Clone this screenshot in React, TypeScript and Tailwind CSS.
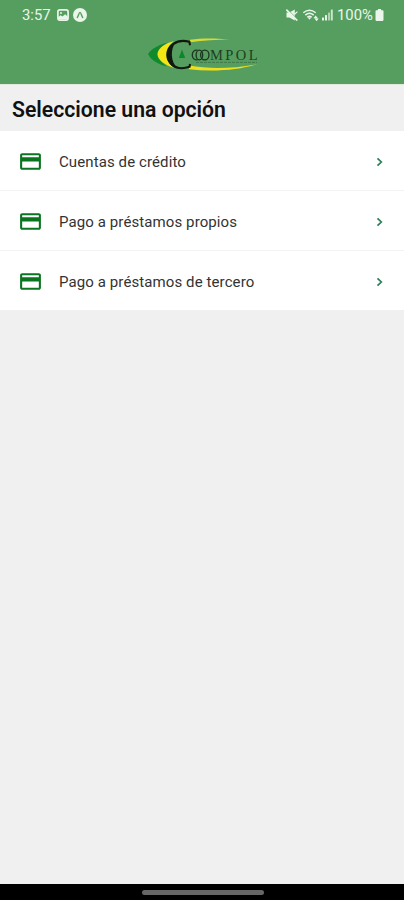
import React from 'react';
import { MdCreditCard } from 'react-icons/md';

const options = [
    'Cuentas de crédito',
    'Pago a préstamos propios',
    'Pago a préstamos de tercero',
];

function StatusBar() {
    return (
        <div className="flex justify-between items-center h-[31px] pl-[22px] pr-[20px] text-[#e9f6e9]">
            <div className="flex items-center">
                <span className="w-[35px] text-[14.8px] leading-none">3:57</span>
                {/* Gallery notification */}
                <svg width="12" height="12" viewBox="0 0 12 12">
                    <rect x="0.9" y="0.9" width="10.2" height="10.2" rx="2" fill="none" stroke="currentColor" strokeWidth="1.7" />
                    <path d="M1 10.5V8.2l2.6-2 1.9 1.3 2.6-2.3L11 7.8v2.7z" fill="currentColor" />
                    <circle cx="4" cy="4" r="1" fill="currentColor" />
                </svg>
                <svg width="14" height="14" viewBox="0 0 14 14" className="ml-[4px]">
                    <circle cx="7" cy="7" r="7" fill="currentColor" />
                    <path d="M4.3 9.4C5.6 8 5.8 4.4 7 4.4S8.4 8 9.7 9.4" fill="none" stroke="#569e60" strokeWidth="1.4" strokeLinecap="round" />
                </svg>
            </div>
            <div className="flex items-center">
                {/* Muted speaker */}
                <svg width="12" height="12" viewBox="0 0 12 12" className="mr-[4px]">
                    <path d="M0.5 3.4h2.8L8.8 0.4v11.2L3.3 8.4H0.5z" fill="currentColor" />
                    <path d="M1.4 0.2l10.4 10.4" stroke="#569e60" strokeWidth="0.8" />
                    <path d="M0.3 0.6l11 11" stroke="currentColor" strokeWidth="1.6" />
                    <path d="M8.6 5.2l2.8-2.6" stroke="currentColor" strokeWidth="1.2" />
                </svg>
                {/* Wifi */}
                <svg width="18" height="14" viewBox="0 0 17 14">
                    <g fill="none" stroke="currentColor" strokeWidth="1.5">
                        <path d="M0.8 4.8Q7 -0.4 13.2 4.8" />
                        <path d="M2.8 7.1Q7 3.5 11.2 7.1" />
                        <path d="M4.8 9.3Q7 7.4 9.2 9.3" />
                    </g>
                    <path d="M5.2 9.5h3.6L7 11.8z" fill="currentColor" />
                    <path d="M11 10.2l2.2-2.6 2.2 2.6zM12 10.6h4.2l-2.1 2.6z" fill="currentColor" />
                </svg>
                {/* Signal */}
                <svg width="13" height="12" viewBox="0 0 13 12" className="ml-[1px]">
                    <g fill="currentColor">
                        <rect x="1" y="8.4" width="2" height="3" rx="0.5" />
                        <rect x="4" y="6" width="2" height="5.4" rx="0.5" />
                        <rect x="7" y="3.4" width="2" height="8" rx="0.5" opacity="0.6" />
                        <rect x="9.8" y="0.6" width="2" height="10.8" rx="0.5" opacity="0.8" />
                    </g>
                </svg>
                <span className="w-[38px] ml-[3px] text-[14.8px] leading-none">100%</span>
                <svg width="9" height="12" viewBox="0 0 8 12">
                    <path d="M2.4 0h3.2v1.3H7q1 0 1 1v8.5q0 1.2-1.2 1.2H1.2Q0 12 0 10.8V2.3q0-1 1-1h1.4z" fill="currentColor" />
                </svg>
            </div>
        </div>
    );
}

function Logo() {
    return (
        <svg width="130" height="46" viewBox="0 0 130 46">
            {/* Swooshes */}
            <path d="M28 10.5C20 12 11 17 8 22C10 27 17 32 27 34.5C20 29 17.5 25.5 17.5 22C17.5 18.5 21 14 28 10.5z" fill="#108b2c" />
            <path d="M34 9C26 11 18 16 17.5 22C17.5 28 25 33 34 36C29 31 26.5 27 26.5 22C26.5 17 29 13 34 9z" fill="#f5e514" />
            <path d="M50 7.8C62 6 74 6 90 7.6C76 8 64 8.6 50 10.2z" fill="#d9db32" />
            <path d="M49 33.6C70 37.2 93 36.5 117 32.2C98 38.2 73 40 49 37.2z" fill="#f0e01c" />
            {/* Large C */}
            <path d="M50 13.2L49.4 9.8C44 8.4 38 8.6 33.6 11.8C26.6 17 26.4 27.5 32.2 32.8C37 36.9 43.5 36.8 49.6 34.8L50 32" fill="none" stroke="#10180f" strokeWidth="2.1" />
            <path d="M36 9.8C26 13 23.6 24.5 29.5 31.8C32 35 35 36.5 38 36.6C30.6 31 29.8 17 36 9.8z" fill="#10180f" />
            <path d="M42 17.5l3.2 8.5h-6.4z" fill="#08892a" />
            {/* Interlocked letters */}
            <g fill="none" stroke="#1b351e" strokeWidth="1.3">
                <path d="M57.5 18.2C50.5 17.2 50.5 28.8 57.5 27.8" />
                <ellipse cx="59.4" cy="23" rx="3.3" ry="4.9" />
                <ellipse cx="64.8" cy="23" rx="4.2" ry="4.9" />
            </g>
            <text x="70" y="27.8" textLength="47.5" lengthAdjust="spacing" fill="#1d3e21" fontFamily="Liberation Serif, serif" fontSize="14.5">MPOL</text>
            <path d="M56 30.4h61" stroke="#254f2b" strokeWidth="1" strokeDasharray="3 1" opacity="0.45" />
        </svg>
    );
}

function OptionRow({ label }: { label: string }) {
    return (
        <button className="flex items-center bg-white w-full h-[59px] pt-[2px] pl-[18px] pr-[20px] text-left">
            <MdCreditCard size={25} color="#0b7420" />
            <span className="ml-[16px] pt-[2px] text-[15px] text-[#333333] tracking-[0.1px]">{label}</span>
            <svg width="9" height="10" viewBox="0 0 9 10" className="ml-auto">
                <path d="M2.5 1.3L6.3 5L2.5 8.7" fill="none" stroke="#2c7f59" strokeWidth="1.7" />
            </svg>
        </button>
    );
}

export default function App() {
    return (
        <div className="flex flex-col bg-[#f0f0f0] w-full h-screen font-['Roboto',sans-serif] overflow-hidden">
            <header className="bg-[#569e60] h-[85px] shrink-0 border-b border-[#dfeade]">
                <StatusBar />
                <div className="flex justify-center pt-px pl-[6px]">
                    <Logo />
                </div>
            </header>

            <h1 className="flex items-center h-[46px] shrink-0 pl-[12px] pt-[4px] font-semibold text-[#111111] text-[21.2px]">
                Seleccione una opción
            </h1>

            <main className="flex flex-col gap-[1px] bg-[#f3f3f3]">
                {options.map((label) => (
                    <OptionRow key={label} label={label} />
                ))}
            </main>

            {/* Android gesture bar */}
            <footer className="flex justify-center bg-black h-4 mt-auto pt-[6px] shrink-0">
                <div className="bg-[#666666] rounded-full w-[122px] h-[5px] ml-[2px]" />
            </footer>
        </div>
    );
}
